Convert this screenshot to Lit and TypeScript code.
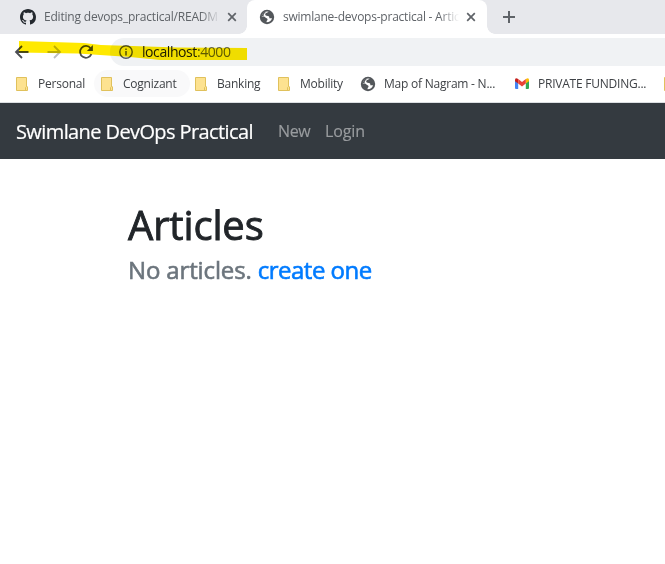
import { LitElement, html, css, svg, nothing } from "lit";
import { customElement, property } from "lit/decorators.js";

const globe = html`<svg class="globe" viewBox="0 0 16 16" width="16" height="16">
  <circle cx="8" cy="8" r="7.2" fill="#53575b" />
  <path d="M9.8 2.8 C8.8 3.8 6.4 3.6 6.2 5.2 C6.1 6.6 7.2 6.8 8.8 6.9 C10.4 7.1 10.4 8.2 10.3 9.2 H13 C12.4 11.6 10.2 13.3 7.6 13.3 V12 C8.8 11.2 9 9.6 7.6 9.2 C6 8.8 6.4 7.8 4.6 7.6 L2.8 7.4 C3 5 5.2 2.6 8 2.6 Z" fill="#fff" />
  <path d="M8 2.6 C5.2 2.6 3.2 4.6 2.8 7 L4.6 7.3 C4.2 5.4 6 3.4 8 2.6 Z" fill="#53575b" />
</svg>`;

const octocat = html`<svg viewBox="0 0 16 16" width="16" height="16">
  <path fill="#24292f" d="M8 0C3.58 0 0 3.58 0 8c0 3.54 2.29 6.53 5.47 7.59.4.07.55-.17.55-.38 0-.19-.01-.82-.01-1.49-2.01.37-2.53-.49-2.69-.94-.09-.23-.48-.94-.82-1.13-.28-.15-.68-.52-.01-.53.63-.01 1.08.58 1.23.82.72 1.21 1.87.87 2.33.66.07-.52.28-.87.51-1.07-1.78-.2-3.64-.89-3.64-3.95 0-.87.31-1.59.82-2.15-.08-.2-.36-1.02.08-2.12 0 0 .67-.21 2.2.82.64-.18 1.32-.27 2-.27s1.36.09 2 .27c1.53-1.04 2.2-.82 2.2-.82.44 1.1.16 1.92.08 2.12.51.56.82 1.27.82 2.15 0 3.07-1.87 3.75-3.65 3.95.29.25.54.73.54 1.48 0 1.07-.01 1.93-.01 2.2 0 .21.15.46.55.38A8 8 0 0 0 16 8c0-4.42-3.58-8-8-8z" />
</svg>`;

const folder = html`<svg viewBox="0 0 12 14" width="12" height="14">
  <path d="M.5.5 H10.5 V9 L11.5 10 V13.5 H.5 Z" fill="#fde290" stroke="#e0c15c" />
  <path d="M9.5 13 V10.5 L10.7 9.3" fill="none" stroke="#e0c15c" />
</svg>`;

const gmail = html`<svg viewBox="0 0 14 11" width="14" height="11">
  <path d="M0 2 L3.2 4.4 V11 H1 Q0 11 0 10 Z" fill="#4285f4" />
  <path d="M14 2 L10.8 4.4 V11 H13 Q14 11 14 10 Z" fill="#34a853" />
  <path d="M10.8 1 Q14 -1 14 2 V3.2 L10.8 5.6 Z" fill="#fbbc04" />
  <path d="M0 3.2 V2 Q0 -1 3.2 1 L3.2 5.6 Z" fill="#c5221f" />
  <path d="M3.2 1 L7 3.9 L10.8 1 V5.6 L7 8.5 L3.2 5.6 Z" fill="#ea4335" />
</svg>`;

const cross = html`<svg viewBox="0 0 10 10" width="10" height="10">
  <path d="M1.2 1.2 L8.8 8.8 M8.8 1.2 L1.2 8.8" stroke="#5f6368" stroke-width="1.7" />
</svg>`;

@customElement("browser-tab")
class BrowserTab extends LitElement {
  @property() label = "";
  @property({ attribute: false }) icon: unknown = nothing;

  static styles = css`
    :host { display: flex; align-items: center; height: 34px; box-sizing: border-box; color: #5f6368; }
    svg { display: block; flex: none; }
    .label {
      flex: 1; margin-left: 8px; white-space: nowrap; min-width: 0;
      font-size: 12px; line-height: 18px; letter-spacing: var(--track, 0);
      -webkit-mask-image: linear-gradient(to right, #000 calc(100% - 20px), transparent);
      mask-image: linear-gradient(to right, #000 calc(100% - 20px), transparent);
    }
    .close { margin-left: 7px; }
  `;

  render() {
    return html`${this.icon}<span class="label">${this.label}</span><span class="close">${cross}</span>`;
  }
}

@customElement("app-root")
class AppRoot extends LitElement {
  static styles = css`
    :host {
      display: block; height: 564px; overflow: hidden; background: #fff;
      font-family: "Open Sans", "Noto Sans", sans-serif;
    }
    svg { display: block; flex: none; }
    .tabs { position: relative; display: flex; height: 34px; background: #e7e8ec; }
    .first { width: 247px; padding: 0 10px 0 20px; --track: -0.2px; }
    .active {
      position: relative; width: 240px; padding: 0 11px 0 12px;
      background: #fff; border-radius: 8px 8px 0 0; --track: -0.23px;
    }
    .foot { position: absolute; bottom: 0; width: 8px; height: 8px; }
    .foot.l { left: 239px; background: radial-gradient(circle at 0 0, transparent 7.5px, #fff 8px); }
    .foot.r { left: 487px; background: radial-gradient(circle at 100% 0, transparent 7.5px, #fff 8px); }
    .plus { margin: 11px 0 0 16px; }
    .toolbar { position: relative; display: flex; align-items: center; height: 36px; }
    .back { margin-left: 14px; }
    .forward { margin-left: 16px; }
    .reload { margin-left: 16px; }
    .address {
      flex: 1; display: flex; align-items: center; height: 28px; margin-left: 16px;
      padding-left: 9px; background: #f0f2f4; border-radius: 14px 0 0 14px;
    }
    .url { margin-left: 9px; font-size: 14px; line-height: 20px; letter-spacing: -0.42px; color: #5f6368; }
    .url b { font-weight: 400; color: #202124; }
    .marker { position: absolute; left: 0; top: 0; mix-blend-mode: multiply; }
    .bookmarks {
      display: flex; height: 33px; box-sizing: border-box; border-bottom: 1px solid #dcdfe2;
      padding: 0 0 5px 16px; overflow: hidden; isolation: isolate;
    }
    .mark {
      display: flex; align-items: center; flex: none; white-space: nowrap;
      color: #3f4246; font-size: 12px; line-height: 16px; letter-spacing: -0.23px;
    }
    .mark.hover { position: relative; }
    .mark.hover::before {
      content: ""; position: absolute; z-index: -1; inset: 0 5px 0 -7px;
      border-radius: 14px; background: #f9f9fa;
    }
    .nav { display: flex; align-items: center; height: 56px; padding: 0 16px; background: #343a40; }
    .brand { width: 262px; color: #fff; font-size: 20px; letter-spacing: -0.6px; -webkit-text-stroke: 0.2px; }
    .link { color: #999c9f; font-size: 16px; letter-spacing: -0.35px; -webkit-text-stroke: 0.15px; }
    .link:last-child { letter-spacing: -0.1px; }
    .new { width: 47px; }
    main { padding: 41px 128px; }
    h1 {
      margin: 0; font-size: 40px; line-height: 50px; font-weight: 500;
      letter-spacing: -0.15px; color: #212529; -webkit-text-stroke: 0.9px;
    }
    h4 {
      margin: 4px 0 0; font-size: 24px; line-height: 32px; font-weight: 500;
      letter-spacing: -0.14px; color: #6c757d; -webkit-text-stroke: 0.6px;
    }
    h4 a { color: #007bff; letter-spacing: -0.5px; }
  `;

  private marks = [
    { text: "Personal", icon: folder, width: 85, gap: 10 },
    { text: "Cognizant", icon: folder, width: 94, gap: 10, hover: true },
    { text: "Banking", icon: folder, width: 83, gap: 10 },
    { text: "Mobility", icon: folder, width: 82, gap: 10 },
    { text: "Map of Nagram - N...", icon: globe, width: 155, gap: 8 },
    { text: "PRIVATE FUNDING...", icon: gmail, width: 149, gap: 9 },
    { text: "", icon: folder, width: 12, gap: 0 },
  ];

  private arrow(color: string) {
    return svg`<path d="M14.5 8 H2.5 M8 2 L2 8 L8 14" fill="none" stroke=${color} stroke-width="1.8" />`;
  }

  render() {
    return html`
      <div class="tabs">
        <browser-tab class="first" .icon=${octocat} label="Editing devops_practical/READM"></browser-tab>
        <browser-tab class="active" .icon=${globe} label="swimlane-devops-practical - Artic"></browser-tab>
        <span class="foot l"></span><span class="foot r"></span>
        <svg class="plus" viewBox="0 0 12 12" width="12" height="12">
          <path d="M6 0 V12 M0 6 H12" stroke="#5f6368" stroke-width="2" />
        </svg>
      </div>
      <div class="toolbar">
        <svg class="back" viewBox="0 0 16 16" width="16" height="16">${this.arrow("#4b4e52")}</svg>
        <svg class="forward" viewBox="0 0 16 16" width="16" height="16">
          <g transform="translate(16 0) scale(-1 1)">${this.arrow("#bcbec1")}</g>
        </svg>
        <svg class="reload" viewBox="0 0 16 16" width="16" height="16">
          <path d="M13.4 10.2 A5.9 5.9 0 1 1 12.6 4.2" fill="none" stroke="#4b4e52" stroke-width="1.8" />
          <path d="M14.9 1 V7 H8.9 Z" fill="#4b4e52" />
        </svg>
        <div class="address">
          <svg viewBox="0 0 14 14" width="14" height="14">
            <circle cx="7" cy="7" r="6.2" fill="none" stroke="#55585c" stroke-width="1.4" />
            <path d="M7 6 V10.5 M7 3.4 V5" stroke="#55585c" stroke-width="1.5" />
          </svg>
          <span class="url"><b>localhost</b>:4000</span>
        </div>
        <svg class="marker" viewBox="0 0 260 36" width="260" height="36">
          <path d="M19 7 L84 9 L101 11 L178 13.5 L247 14 V26 L160 26 L130 23 L100 21 L78 19.5 L19 18.5 Z" fill="#ffe900" />
        </svg>
      </div>
      <div class="bookmarks">
        ${this.marks.map(
          (m) => html`<div class="mark ${m.hover ? "hover" : ""}" style="width:${m.width}px">
            ${m.icon}<span style="margin-left:${m.gap}px">${m.text}</span>
          </div>`
        )}
      </div>
      <nav class="nav">
        <span class="brand">Swimlane DevOps Practical</span>
        <span class="link new">New</span>
        <span class="link">Login</span>
      </nav>
      <main>
        <h1>Articles</h1>
        <h4>No articles. <a>create one</a></h4>
      </main>
    `;
  }
}
